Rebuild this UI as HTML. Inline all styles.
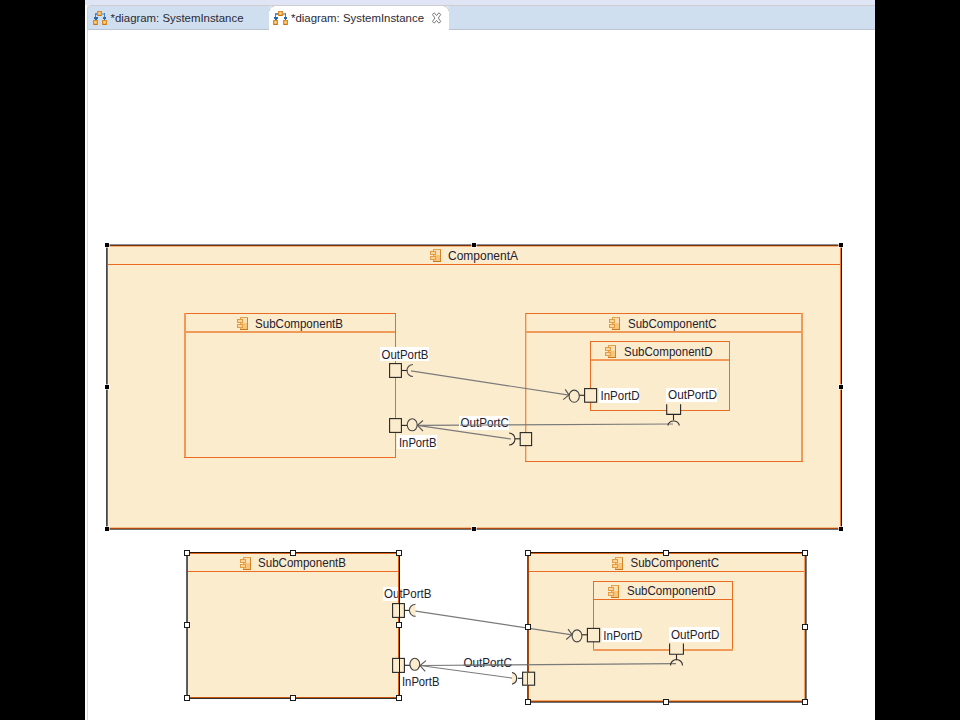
<!DOCTYPE html>
<html><head><meta charset="utf-8">
<style>
html,body{margin:0;padding:0;background:#000;width:960px;height:720px;overflow:hidden}
svg{position:absolute;left:0;top:0;display:block}
text{font-family:"Liberation Sans",sans-serif;font-size:12px}
</style></head><body>
<svg width="960" height="720" viewBox="0 0 960 720" shape-rendering="crispEdges">
<defs>
  <linearGradient id="cg" x1="0" y1="0" x2="1" y2="1">
    <stop offset="0" stop-color="#fde3b8"/><stop offset="1" stop-color="#f6b45a"/>
  </linearGradient>
  <g id="cicon" shape-rendering="crispEdges">
    <rect x="3" y="0" width="8" height="13" fill="#e4a04a"/>
    <rect x="10" y="1" width="1" height="12" fill="#d08426"/>
    <rect x="3" y="12" width="8" height="1" fill="#c8781a"/>
    <rect x="4" y="1" width="6" height="5" fill="#fde0b4"/>
    <rect x="4" y="6" width="6" height="6" fill="#f8c47a"/>
    <rect x="0" y="2" width="6" height="4" fill="#e29c44"/>
    <rect x="1" y="3" width="4" height="2" fill="#fcd59c"/>
    <rect x="0" y="7" width="6" height="4" fill="#e29c44"/>
    <rect x="1" y="8" width="4" height="2" fill="#fcd59c"/>
  </g>
  <radialGradient id="sg" cx="0.5" cy="0.45" r="0.6">
    <stop offset="0" stop-color="#ffe0a0"/><stop offset="0.6" stop-color="#fbc068"/><stop offset="1" stop-color="#e59a3a"/>
  </radialGradient>
</defs>

<rect x="85" y="0" width="790" height="720" fill="#fff"/>
<rect x="86" y="0" width="789" height="10" fill="#dfe5f5"/>
<rect x="85" y="0" width="1" height="5" fill="#e8ecf8"/>
<path d="M88 30 V10 Q88 6 92 6 H875 V30 Z" fill="#cfdfef" shape-rendering="geometricPrecision"/>
<path d="M87.5 30 V10 Q87.5 5.5 92 5.5 H875" fill="none" stroke="#cfcdd2" stroke-width="1" shape-rendering="geometricPrecision"/>
<rect x="85" y="5" width="2" height="715" fill="#fbfbfd"/>
<rect x="88" y="29" width="787" height="1" fill="#bcc4d2"/>
<rect x="87" y="30" width="1" height="690" fill="#d8d8d8"/>
<path d="M269 30 V10 Q269 6 273 6 H445 Q449 6 449 10 V30 Z" fill="#fff" shape-rendering="geometricPrecision"/>
<path d="M269.5 11 Q269.5 6.5 274 6.5" fill="none" stroke="#c8ccd4" stroke-width="1" shape-rendering="geometricPrecision"/>
<path d="M444 6.5 Q448.5 6.5 448.5 11" fill="none" stroke="#c8ccd4" stroke-width="1" shape-rendering="geometricPrecision"/>
<g shape-rendering="crispEdges">
<rect x="97" y="11" width="5" height="5" fill="#de8a26"/>
<rect x="98" y="12" width="3" height="3" fill="url(#sg)"/>
<rect x="98" y="15" width="3" height="1" fill="#c47412"/>
<rect x="93" y="20" width="5" height="5" fill="#de8a26"/>
<rect x="94" y="21" width="3" height="3" fill="url(#sg)"/>
<rect x="94" y="24" width="3" height="1" fill="#c47412"/>
<rect x="102" y="20" width="5" height="5" fill="#de8a26"/>
<rect x="103" y="21" width="3" height="3" fill="url(#sg)"/>
<rect x="103" y="24" width="3" height="1" fill="#c47412"/>
<rect x="95" y="13" width="2" height="2" fill="#5a90c8"/>
<rect x="95" y="14" width="1" height="4" fill="#3f7fc2"/>
<rect x="102" y="13" width="3" height="2" fill="#8ab4de"/>
<rect x="104" y="13" width="1" height="5" fill="#3f7fc2"/>
<rect x="94" y="17" width="4" height="2" fill="#2a68ae"/>
<rect x="95" y="19" width="2" height="1" fill="#2a68ae"/>
<rect x="103" y="17" width="3" height="2" fill="#2a68ae"/>
<rect x="104" y="19" width="1" height="1" fill="#2a68ae"/>
</g>
<g shape-rendering="crispEdges">
<rect x="278" y="11" width="5" height="5" fill="#de8a26"/>
<rect x="279" y="12" width="3" height="3" fill="url(#sg)"/>
<rect x="279" y="15" width="3" height="1" fill="#c47412"/>
<rect x="273" y="20" width="5" height="5" fill="#de8a26"/>
<rect x="274" y="21" width="3" height="3" fill="url(#sg)"/>
<rect x="274" y="24" width="3" height="1" fill="#c47412"/>
<rect x="283" y="20" width="5" height="5" fill="#de8a26"/>
<rect x="284" y="21" width="3" height="3" fill="url(#sg)"/>
<rect x="284" y="24" width="3" height="1" fill="#c47412"/>
<rect x="275" y="13" width="3" height="2" fill="#5a90c8"/>
<rect x="275" y="14" width="1" height="4" fill="#3f7fc2"/>
<rect x="283" y="13" width="3" height="2" fill="#8ab4de"/>
<rect x="285" y="13" width="1" height="5" fill="#3f7fc2"/>
<rect x="274" y="17" width="4" height="2" fill="#2a68ae"/>
<rect x="275" y="19" width="2" height="1" fill="#2a68ae"/>
<rect x="284" y="17" width="3" height="2" fill="#2a68ae"/>
<rect x="285" y="19" width="1" height="1" fill="#2a68ae"/>
</g>
<text x="110.5" y="22" textLength="133" lengthAdjust="spacingAndGlyphs" style="font-size:11.5px;fill:#2a2a36" >*diagram: SystemInstance</text>
<text x="291" y="22" textLength="133" lengthAdjust="spacingAndGlyphs" style="font-size:11.5px;fill:#2a2a36" >*diagram: SystemInstance</text>
<path d="M432.4 14.4 L434.4 12.9 L436.6 15.6 L438.8 12.9 L440.8 14.4 L438.3 18 L440.8 21.6 L438.8 23.1 L436.6 20.4 L434.4 23.1 L432.4 21.6 L434.9 18 Z" fill="#fff" stroke="#7c7c7c" stroke-width="1" stroke-linejoin="round" shape-rendering="geometricPrecision"/>
<rect x="107" y="245" width="734" height="284" fill="#fcecce"/>
<rect x="106" y="244" width="736" height="1" fill="#8a9098"/>
<rect x="107" y="245" width="734" height="1" fill="#7c3408"/>
<rect x="108" y="246" width="732" height="1" fill="#f4b078"/>
<rect x="106" y="244" width="1" height="286" fill="#40464c"/>
<rect x="107" y="245" width="1" height="284" fill="#c85412"/>
<rect x="840" y="245" width="1" height="284" fill="#ee7a36"/>
<rect x="841" y="244" width="1" height="286" fill="#2c1408"/>
<rect x="108" y="527" width="732" height="1" fill="#f6bc88"/>
<rect x="107" y="528" width="734" height="1" fill="#b04a0c"/>
<rect x="106" y="529" width="736" height="1" fill="#6a7078"/>
<rect x="108" y="264" width="732" height="1" fill="#ea6c22"/>
<use href="#cicon" x="430" y="249"/>
<text x="448" y="260" textLength="70" lengthAdjust="spacingAndGlyphs" style="font-size:12px;fill:#24202c" >ComponentA</text>
<rect x="185" y="313" width="211" height="1" fill="#ea6c22"/>
<rect x="184" y="313" width="2" height="145" fill="#f09a5a"/>
<rect x="186" y="331" width="210" height="2" fill="#f09a5a"/>
<rect x="395" y="313" width="1" height="145" fill="#ea6c22"/>
<rect x="184" y="457" width="212" height="1" fill="#ea6c22"/>
<use href="#cicon" x="237" y="317"/>
<text x="255" y="327.6" textLength="88" lengthAdjust="spacingAndGlyphs" style="font-size:12px;fill:#24202c" >SubComponentB</text>
<rect x="525" y="313" width="278" height="1" fill="#ea6c22"/>
<rect x="525" y="313" width="1" height="149" fill="#ee8c4c"/>
<rect x="526" y="314" width="1" height="147" fill="#f7c898"/>
<rect x="801" y="313" width="2" height="149" fill="#f09a5a"/>
<rect x="526" y="331" width="276" height="2" fill="#f09a5a"/>
<rect x="525" y="461" width="278" height="1" fill="#ea6c22"/>
<use href="#cicon" x="609" y="317"/>
<text x="628" y="327.6" textLength="88.5" lengthAdjust="spacingAndGlyphs" style="font-size:12px;fill:#24202c" >SubComponentC</text>
<rect x="590" y="341" width="140" height="1" fill="#ea6c22"/>
<rect x="590" y="341" width="1" height="70" fill="#ea6c22"/>
<rect x="729" y="341" width="1" height="70" fill="#ea6c22"/>
<rect x="590" y="410" width="140" height="1" fill="#ea6c22"/>
<rect x="591" y="359" width="138" height="2" fill="#f09a5a"/>
<use href="#cicon" x="605" y="345"/>
<text x="624" y="355.6" textLength="88.5" lengthAdjust="spacingAndGlyphs" style="font-size:12px;fill:#24202c" >SubComponentD</text>
<g shape-rendering="geometricPrecision" fill="none" stroke="#7a7a7a" stroke-width="1.2">
<line x1="411" y1="370.9" x2="569" y2="395.1"/>
<line x1="673" y1="424" x2="417.5" y2="425.4"/>
<line x1="511" y1="439" x2="417.5" y2="425.4"/>
</g>
<rect x="380" y="347" width="49" height="14" fill="#fff"/>
<text x="381.5" y="359" textLength="47" lengthAdjust="spacingAndGlyphs" style="font-size:12px;fill:#24202c" >OutPortB</text>
<rect x="397" y="435" width="40" height="14" fill="#fff"/>
<text x="399" y="446.5" textLength="37.5" lengthAdjust="spacingAndGlyphs" style="font-size:12px;fill:#24202c" >InPortB</text>
<rect x="459" y="416" width="50" height="14" fill="#fff"/>
<text x="460.5" y="426.5" textLength="48.5" lengthAdjust="spacingAndGlyphs" style="font-size:12px;fill:#24202c" >OutPortC</text>
<rect x="599" y="388" width="40" height="14.5" fill="#fff"/>
<text x="600.5" y="400" textLength="39" lengthAdjust="spacingAndGlyphs" style="font-size:12px;fill:#24202c" >InPortD</text>
<rect x="666" y="388" width="51" height="14" fill="#fff"/>
<text x="668" y="398.7" textLength="49" lengthAdjust="spacingAndGlyphs" style="font-size:12px;fill:#24202c" >OutPortD</text>
<line x1="460" y1="425.2" x2="509" y2="424.8" stroke="#7a7a7a" shape-rendering="geometricPrecision"/>
<g shape-rendering="geometricPrecision" fill="none" stroke="#262626" stroke-width="1.1">
<rect x="389.6" y="363.6" width="11.8" height="13.8" fill="#fcecce"/>
<line x1="401.5" y1="370.5" x2="407.5" y2="370.5"/>
<path d="M413 364.5 A6 6 0 0 0 413 376.5" stroke="#555"/>
<rect x="389.6" y="418.6" width="11.8" height="13.8" fill="#fcecce"/>
<line x1="401.5" y1="425.4" x2="407" y2="425.4"/>
<ellipse cx="412.2" cy="424.8" rx="5" ry="6" stroke="#444"/>
<path d="M423 420.5 L417.5 425.4 L423 431" stroke="#555"/>
<rect x="520.2" y="432.6" width="11.4" height="13" fill="#fcecce"/>
<line x1="514.6" y1="438.8" x2="520.2" y2="438.8"/>
<path d="M509 433 A6 6 0 0 1 509 445" stroke="#333"/>
<rect x="584.6" y="388.6" width="12" height="13.6" fill="#fcecce"/>
<line x1="579.4" y1="395.3" x2="584.6" y2="395.3"/>
<ellipse cx="574.2" cy="396.2" rx="5.1" ry="6.1" stroke="#444"/>
<path d="M565.2 389.4 L569 395 L563.2 399.6" stroke="#555"/>
<rect x="667" y="402" width="13.4" height="12" fill="#fcecce" stroke="none"/>
<path d="M666.7 404.2 V414.4 H680.6 V404.2"/>
<line x1="673.5" y1="414.4" x2="673.5" y2="420.3"/>
<path d="M667.8 425.5 A6 6 0 0 1 679.4 425.5" stroke="#333"/>
</g>
<rect x="104" y="242" width="6" height="6" fill="#fff" opacity="0.6"/>
<rect x="105" y="243" width="4" height="4" fill="#000"/>
<rect x="471" y="242" width="6" height="6" fill="#fff" opacity="0.6"/>
<rect x="472" y="243" width="4" height="4" fill="#000"/>
<rect x="838" y="242" width="6" height="6" fill="#fff" opacity="0.6"/>
<rect x="839" y="243" width="4" height="4" fill="#000"/>
<rect x="104" y="384" width="6" height="6" fill="#fff" opacity="0.6"/>
<rect x="105" y="385" width="4" height="4" fill="#000"/>
<rect x="838" y="384" width="6" height="6" fill="#fff" opacity="0.6"/>
<rect x="839" y="385" width="4" height="4" fill="#000"/>
<rect x="104" y="526" width="6" height="6" fill="#fff" opacity="0.6"/>
<rect x="105" y="527" width="4" height="4" fill="#000"/>
<rect x="471" y="526" width="6" height="6" fill="#fff" opacity="0.6"/>
<rect x="472" y="527" width="4" height="4" fill="#000"/>
<rect x="838" y="526" width="6" height="6" fill="#fff" opacity="0.6"/>
<rect x="839" y="527" width="4" height="4" fill="#000"/>
<rect x="187" y="553" width="212" height="145" fill="#fcecce"/>
<rect x="186" y="552" width="1" height="147" fill="#5c6068"/>
<rect x="187" y="553" width="1" height="145" fill="#98400e"/>
<rect x="186" y="552" width="214" height="1" fill="#2a1608"/>
<rect x="187" y="553" width="212" height="1" fill="#e0681c"/>
<rect x="398" y="553" width="1" height="145" fill="#d85c10"/>
<rect x="399" y="552" width="1" height="147" fill="#1c1008"/>
<rect x="187" y="697" width="212" height="1" fill="#c85410"/>
<rect x="186" y="698" width="214" height="1" fill="#30302e"/>
<rect x="188" y="571" width="210" height="1" fill="#ea6c22"/>
<use href="#cicon" x="240" y="557"/>
<text x="258" y="567.3" textLength="88" lengthAdjust="spacingAndGlyphs" style="font-size:12px;fill:#24202c" >SubComponentB</text>
<rect x="528" y="553" width="277" height="149" fill="#fcecce"/>
<rect x="527" y="552" width="1" height="150" fill="#50565c"/>
<rect x="528" y="553" width="1" height="148" fill="#a8480e"/>
<rect x="527" y="552" width="280" height="1" fill="#2a1608"/>
<rect x="528" y="553" width="277" height="1" fill="#e0681c"/>
<rect x="804" y="553" width="1" height="148" fill="#f4a060"/>
<rect x="805" y="552" width="1" height="150" fill="#8a3808"/>
<rect x="806" y="552" width="1" height="151" fill="#7a8088"/>
<rect x="529" y="700" width="275" height="1" fill="#f4a868"/>
<rect x="528" y="701" width="278" height="1" fill="#9a4008"/>
<rect x="527" y="702" width="280" height="1" fill="#68707a"/>
<rect x="527" y="701" width="1" height="2" fill="#50565c"/>
<rect x="529" y="571" width="275" height="1" fill="#ea6c22"/>
<use href="#cicon" x="612" y="557"/>
<text x="630.5" y="567.3" textLength="88.5" lengthAdjust="spacingAndGlyphs" style="font-size:12px;fill:#24202c" >SubComponentC</text>
<rect x="593" y="581" width="140" height="1" fill="#ea6c22"/>
<rect x="593" y="581" width="1" height="70" fill="#ea6c22"/>
<rect x="732" y="581" width="1" height="70" fill="#ea6c22"/>
<rect x="593" y="649" width="140" height="2" fill="#f09a5a"/>
<rect x="594" y="599" width="138" height="1" fill="#ea6c22"/>
<use href="#cicon" x="608" y="585"/>
<text x="627" y="595.3" textLength="88.5" lengthAdjust="spacingAndGlyphs" style="font-size:12px;fill:#24202c" >SubComponentD</text>
<g shape-rendering="geometricPrecision" fill="none" stroke="#7a7a7a" stroke-width="1.2">
<line x1="414" y1="610.8" x2="572" y2="634.8"/>
<line x1="676" y1="663.6" x2="420" y2="665.5"/>
<line x1="514" y1="678.3" x2="420" y2="665.5"/>
</g>
<rect x="382.5" y="587" width="16" height="14" fill="#fff"/>
<text x="384" y="598.3" textLength="47.5" lengthAdjust="spacingAndGlyphs" style="font-size:12px;fill:#24202c" >OutPortB</text>
<text x="402" y="686" textLength="37.5" lengthAdjust="spacingAndGlyphs" style="font-size:12px;fill:#24202c" >InPortB</text>
<text x="463.5" y="666.8" textLength="48.5" lengthAdjust="spacingAndGlyphs" style="font-size:12px;fill:#24202c" >OutPortC</text>
<rect x="602" y="628.2" width="40" height="14.2" fill="#fff"/>
<text x="603.3" y="640" textLength="39" lengthAdjust="spacingAndGlyphs" style="font-size:12px;fill:#24202c" >InPortD</text>
<rect x="669" y="627" width="50.5" height="14.5" fill="#fff"/>
<text x="671" y="638.7" textLength="48.5" lengthAdjust="spacingAndGlyphs" style="font-size:12px;fill:#24202c" >OutPortD</text>
<line x1="463" y1="665.2" x2="512" y2="664.8" stroke="#7a7a7a" shape-rendering="geometricPrecision"/>
<rect x="398" y="572" width="1" height="126" fill="#d85c10"/>
<g shape-rendering="geometricPrecision" fill="#fcecce" stroke="#262626" stroke-width="1.1">
<rect x="392.6" y="603.6" width="11.8" height="13.8"/>
<line x1="404.4" y1="610.4" x2="410" y2="610.4"/>
<path d="M415.5 604.2 A6 6 0 0 0 415.5 616.4" stroke="#555"/>
<rect x="392.6" y="658.4" width="11.8" height="14"/>
<line x1="404.4" y1="665.3" x2="410" y2="665.3"/>
<ellipse cx="414.8" cy="664.3" rx="4.9" ry="6" stroke="#444"/>
<path d="M426 660.6 L420 665.5 L425.2 671.4" fill="none" stroke="#555"/>
<rect x="522.6" y="672.2" width="12" height="13"/>
<line x1="517.8" y1="678.3" x2="522.6" y2="678.3"/>
<path d="M512 672.5 A6 6 0 0 1 512 684.2" stroke="#333"/>
<rect x="587.4" y="628.4" width="12.2" height="13.4"/>
<line x1="582" y1="634.8" x2="587.4" y2="634.8"/>
<ellipse cx="577" cy="635.9" rx="4.9" ry="6" fill="none" stroke="#444"/>
<path d="M568 629.1 L572 634.5 L566.2 639.5" fill="none" stroke="#555"/>
<rect x="670" y="642" width="13.2" height="12" fill="#fcecce" stroke="none"/>
<path d="M669.6 643.6 V654.2 H683.4 V643.6" fill="none"/>
<line x1="676.5" y1="654.2" x2="676.5" y2="660.3"/>
<path d="M670.5 665.5 A6 6 0 0 1 682.5 665.5" fill="none" stroke="#333"/>
</g>
<rect x="399" y="552" width="1" height="147" fill="#1c1008"/>
<rect x="527" y="552" width="1" height="150" fill="#50565c"/>
<rect x="184" y="550" width="6" height="6" fill="#1a1a1a"/>
<rect x="185" y="551" width="4" height="4" fill="#fff"/>
<rect x="290" y="550" width="6" height="6" fill="#1a1a1a"/>
<rect x="291" y="551" width="4" height="4" fill="#fff"/>
<rect x="396" y="550" width="6" height="6" fill="#1a1a1a"/>
<rect x="397" y="551" width="4" height="4" fill="#fff"/>
<rect x="184" y="622" width="6" height="6" fill="#1a1a1a"/>
<rect x="185" y="623" width="4" height="4" fill="#fff"/>
<rect x="396" y="622" width="6" height="6" fill="#1a1a1a"/>
<rect x="397" y="623" width="4" height="4" fill="#fff"/>
<rect x="184" y="695" width="6" height="6" fill="#1a1a1a"/>
<rect x="185" y="696" width="4" height="4" fill="#fff"/>
<rect x="290" y="695" width="6" height="6" fill="#1a1a1a"/>
<rect x="291" y="696" width="4" height="4" fill="#fff"/>
<rect x="396" y="695" width="6" height="6" fill="#1a1a1a"/>
<rect x="397" y="696" width="4" height="4" fill="#fff"/>
<rect x="525" y="550" width="6" height="6" fill="#1a1a1a"/>
<rect x="526" y="551" width="4" height="4" fill="#fff"/>
<rect x="663" y="550" width="6" height="6" fill="#1a1a1a"/>
<rect x="664" y="551" width="4" height="4" fill="#fff"/>
<rect x="802" y="550" width="6" height="6" fill="#1a1a1a"/>
<rect x="803" y="551" width="4" height="4" fill="#fff"/>
<rect x="525" y="624" width="6" height="6" fill="#1a1a1a"/>
<rect x="526" y="625" width="4" height="4" fill="#fff"/>
<rect x="802" y="624" width="6" height="6" fill="#1a1a1a"/>
<rect x="803" y="625" width="4" height="4" fill="#fff"/>
<rect x="525" y="699" width="6" height="6" fill="#1a1a1a"/>
<rect x="526" y="700" width="4" height="4" fill="#fff"/>
<rect x="663" y="699" width="6" height="6" fill="#1a1a1a"/>
<rect x="664" y="700" width="4" height="4" fill="#fff"/>
<rect x="802" y="699" width="6" height="6" fill="#1a1a1a"/>
<rect x="803" y="700" width="4" height="4" fill="#fff"/>
</svg>
</body></html>
